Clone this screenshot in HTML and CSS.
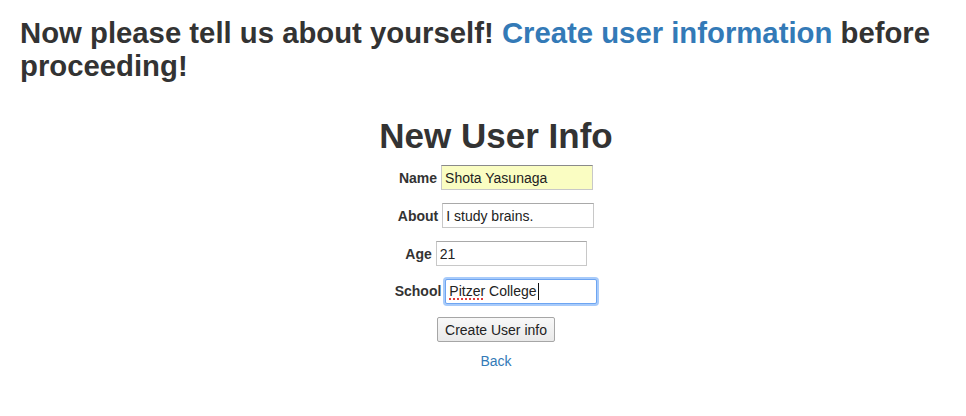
FILE: index.html
```html
<!DOCTYPE html>
<html>
<head>
<meta charset="utf-8">
<title>New User Info</title>
<link rel="stylesheet" href="styles.css">
</head>
<body>
<div class="page">
  <h2 class="intro"><span>Now please tell us about yourself!</span> <a href="#">Create user information</a> <span>before</span> <span>proceeding!</span></h2>
  <div class="form-wrap">
    <h1 class="title">New User Info</h1>
    <form class="user-form">
      <div class="row"><label>Name</label><input class="field autofill" type="text" value="Shota Yasunaga"></div>
      <div class="row"><label>About</label><input class="field" type="text" value="I study brains."></div>
      <div class="row"><label>Age</label><input class="field narrow" type="text" value="21"></div>
      <div class="row"><label>School</label><div class="field focused"><span class="misspelled">Pitzer</span> College<span class="caret"></span></div></div>
      <div class="row"><button type="button" class="btn">Create User info</button></div>
    </form>
    <a class="back" href="#">Back</a>
  </div>
</div>
</body>
</html>
```
FILE: styles.css
```css
* { box-sizing: border-box; }
html, body { margin: 0; padding: 0; background: #fff; }
body {
  font-family: "Liberation Sans", Arial, sans-serif;
  font-size: 14px;
  color: #333;
}
a { color: #337ab7; text-decoration: none; }
.page { padding: 16px 0 0 20px; }
.intro {
  margin: 0;
  font-size: 29.3px;
  line-height: 33px;
  font-weight: bold;
}
.form-wrap {
  margin-left: 6px;
  text-align: center;
}
.title {
  margin: 34px 0 9px;
  font-size: 35px;
  line-height: 40px;
  font-weight: bold;
}
.user-form {
  display: flex;
  flex-direction: column;
  align-items: center;
  gap: 13px;
}
.row {
  display: flex;
  align-items: baseline;
  gap: 4px;
}
.row label { font-weight: bold; font-size: 14px; }
.field {
  width: 152px;
  height: 25px;
  padding: 0 3px;
  border: 1px solid #c8c8c8;
  border-top-color: #a9a9a9;
  font: 14px "Liberation Sans", Arial, sans-serif;
  color: #222;
  background: #fff;
  text-align: left;
  line-height: 23px;
  border-radius: 0;
  outline: none;
}
.narrow { width: 151px; }
.autofill { background: #fafdc2; border-top-color: #8a8a8a; }
.focused {
  border-color: #6da5f2;
  box-shadow: 0 0 0 2px rgba(96, 160, 245, 0.55);
  border-radius: 2px;
  white-space: nowrap;
}
.misspelled {
  text-decoration: underline dotted #e23b3b;
  text-decoration-thickness: 2px;
  text-underline-offset: 2px;
}
.caret {
  display: inline-block;
  width: 1px;
  height: 17px;
  background: #111;
  vertical-align: -4px;
  margin-left: 1px;
}
.btn {
  width: 118px;
  height: 25px;
  padding: 0;
  font: 14px "Liberation Sans", Arial, sans-serif;
  color: #222;
  background: linear-gradient(#f8f8f8, #e9e9e9);
  border: 1px solid #a6a6a6;
  border-radius: 2px;
}
.back {
  display: inline-block;
  margin-top: 9px;
  font-size: 14px;
  line-height: 20px;
}
```
